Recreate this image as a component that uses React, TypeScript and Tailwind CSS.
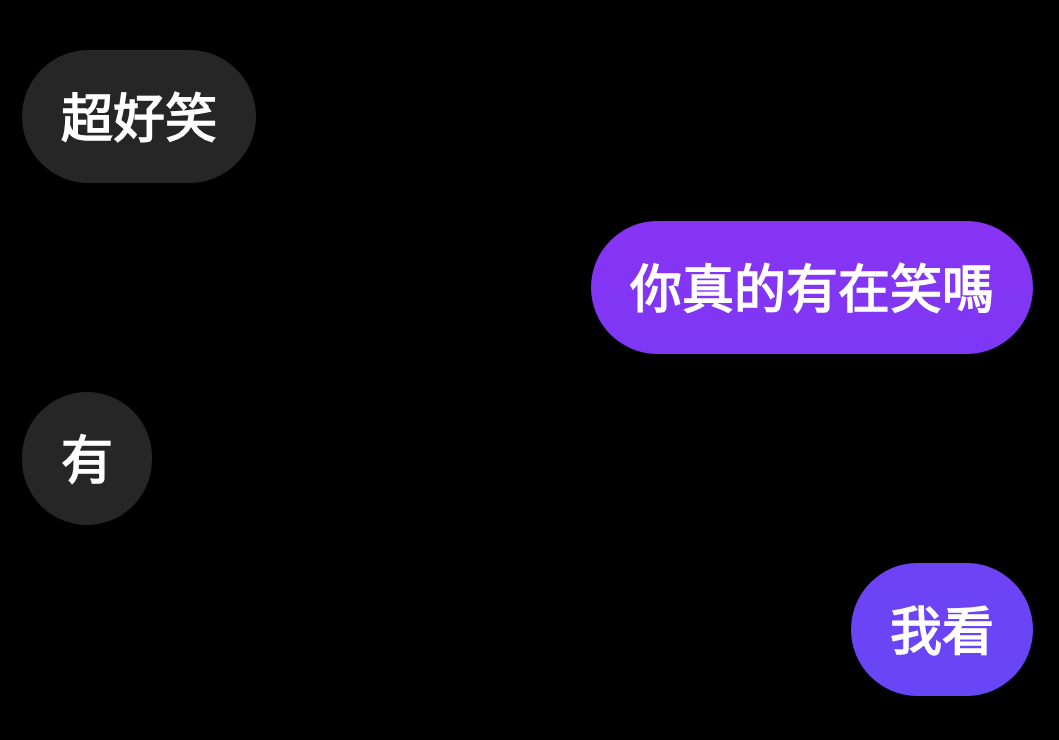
const messages = [
  { text: "超好笑", mine: false, color: "" },
  { text: "你真的有在笑嗎", mine: true, color: "bg-gradient-to-b from-[#8833f3] to-[#7d38f4]" },
  { text: "有", mine: false, color: "" },
  { text: "我看", mine: true, color: "bg-gradient-to-b from-[#6e42f5] to-[#6746f6]" },
]

export default function App() {
  return (
    <div
      className="min-h-screen w-full bg-black pt-[50px] pl-[22px] pr-[26px] flex flex-col gap-[38px]"
      style={{ fontFamily: '"Noto Sans CJK TC", "Noto Sans", sans-serif' }}
    >
      {messages.map((m) => (
        <div key={m.text} className={m.mine ? "flex justify-end" : "flex justify-start"}>
          <div
            className={
              "h-[133px] flex items-center rounded-full px-[39px] pb-[3px] text-[52px] leading-[52px] font-normal text-white [-webkit-text-stroke:1.5px_white] " +
              (m.mine ? m.color : "bg-[#262626]")
            }
          >
            {m.text}
          </div>
        </div>
      ))}
    </div>
  )
}
